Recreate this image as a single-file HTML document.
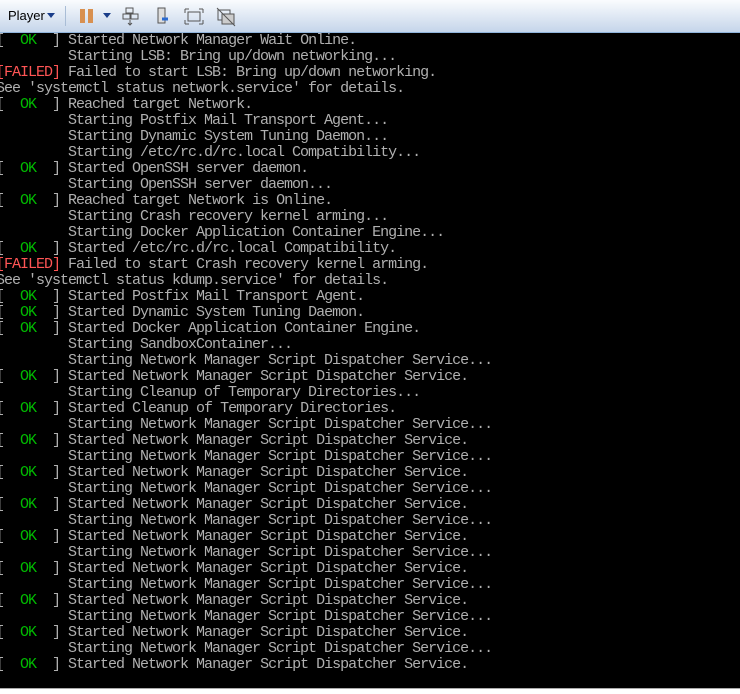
<!DOCTYPE html><html><head><style>
html,body{margin:0;width:740px;height:694px;overflow:hidden;background:#000}
body{position:relative}
#tb{position:absolute;left:0;top:0;width:740px;height:32px;background:linear-gradient(#fafcfe,#c5d5ea);border-bottom:1px solid #90b4dc;font-family:"Liberation Sans",sans-serif;font-size:13px;z-index:2}
#t{position:absolute;left:-4px;top:33px;margin:0;font-family:"Liberation Mono",monospace;font-size:15px;letter-spacing:-1px;line-height:16px;color:#b0b0b0;white-space:pre}
.g{color:#0b0}.r{color:#f55}
#bb{position:absolute;left:0;top:688px;width:740px;height:6px;background:#fff;border-top:1px solid #aaa;z-index:2}
</style></head><body>
<div id="tb">
<span style="position:absolute;left:8px;top:8px;color:#000">Player</span>
<span style="position:absolute;left:47px;top:13px;border:4px solid transparent;border-top:5px solid #1a3d8a"></span>
<div style="position:absolute;left:65px;top:6px;width:1px;height:20px;background:#a9bdd6"></div>
<div style="position:absolute;left:80px;top:9px;width:5px;height:14px;background:#d89050"></div>
<div style="position:absolute;left:88px;top:9px;width:5px;height:14px;background:#d89050"></div>
<span style="position:absolute;left:103px;top:13px;border:4px solid transparent;border-top:5px solid #1a3d8a"></span>
<svg style="position:absolute;left:122px;top:6px" width="120" height="22" fill="none" stroke="#555">
<rect x="4" y="2" width="7" height="5"/><rect x="1" y="8" width="7" height="5"/><rect x="9" y="8" width="7" height="5"/><path d="M8 14v5M6 17l2 2 2-2"/>
<rect x="36" y="2" width="7" height="15" fill="#ddd"/><path d="M40 13h6" stroke="#2a6ad0" stroke-width="3"/>
<rect x="66" y="6" width="12" height="9"/><path d="M63 3h4M63 3v4M81 3h-4M81 3v4M63 18h4M63 18v-4M81 18h-4M81 18v-4"/>
<rect x="96" y="4" width="12" height="10"/><rect x="100" y="8" width="12" height="10" fill="#ccc"/><path d="M95 2l18 18"/>
</svg>
</div>
<pre id="t">[  <span class="g">OK</span>  ] Started Network Manager Wait Online.
         Starting LSB: Bring up/down networking...
<span class="r">[FAILED]</span> Failed to start LSB: Bring up/down networking.
See 'systemctl status network.service' for details.
[  <span class="g">OK</span>  ] Reached target Network.
         Starting Postfix Mail Transport Agent...
         Starting Dynamic System Tuning Daemon...
         Starting /etc/rc.d/rc.local Compatibility...
[  <span class="g">OK</span>  ] Started OpenSSH server daemon.
         Starting OpenSSH server daemon...
[  <span class="g">OK</span>  ] Reached target Network is Online.
         Starting Crash recovery kernel arming...
         Starting Docker Application Container Engine...
[  <span class="g">OK</span>  ] Started /etc/rc.d/rc.local Compatibility.
<span class="r">[FAILED]</span> Failed to start Crash recovery kernel arming.
See 'systemctl status kdump.service' for details.
[  <span class="g">OK</span>  ] Started Postfix Mail Transport Agent.
[  <span class="g">OK</span>  ] Started Dynamic System Tuning Daemon.
[  <span class="g">OK</span>  ] Started Docker Application Container Engine.
         Starting SandboxContainer...
         Starting Network Manager Script Dispatcher Service...
[  <span class="g">OK</span>  ] Started Network Manager Script Dispatcher Service.
         Starting Cleanup of Temporary Directories...
[  <span class="g">OK</span>  ] Started Cleanup of Temporary Directories.
         Starting Network Manager Script Dispatcher Service...
[  <span class="g">OK</span>  ] Started Network Manager Script Dispatcher Service.
         Starting Network Manager Script Dispatcher Service...
[  <span class="g">OK</span>  ] Started Network Manager Script Dispatcher Service.
         Starting Network Manager Script Dispatcher Service...
[  <span class="g">OK</span>  ] Started Network Manager Script Dispatcher Service.
         Starting Network Manager Script Dispatcher Service...
[  <span class="g">OK</span>  ] Started Network Manager Script Dispatcher Service.
         Starting Network Manager Script Dispatcher Service...
[  <span class="g">OK</span>  ] Started Network Manager Script Dispatcher Service.
         Starting Network Manager Script Dispatcher Service...
[  <span class="g">OK</span>  ] Started Network Manager Script Dispatcher Service.
         Starting Network Manager Script Dispatcher Service...
[  <span class="g">OK</span>  ] Started Network Manager Script Dispatcher Service.
         Starting Network Manager Script Dispatcher Service...
[  <span class="g">OK</span>  ] Started Network Manager Script Dispatcher Service.</pre>
<div id="bb"></div>
</body></html>
